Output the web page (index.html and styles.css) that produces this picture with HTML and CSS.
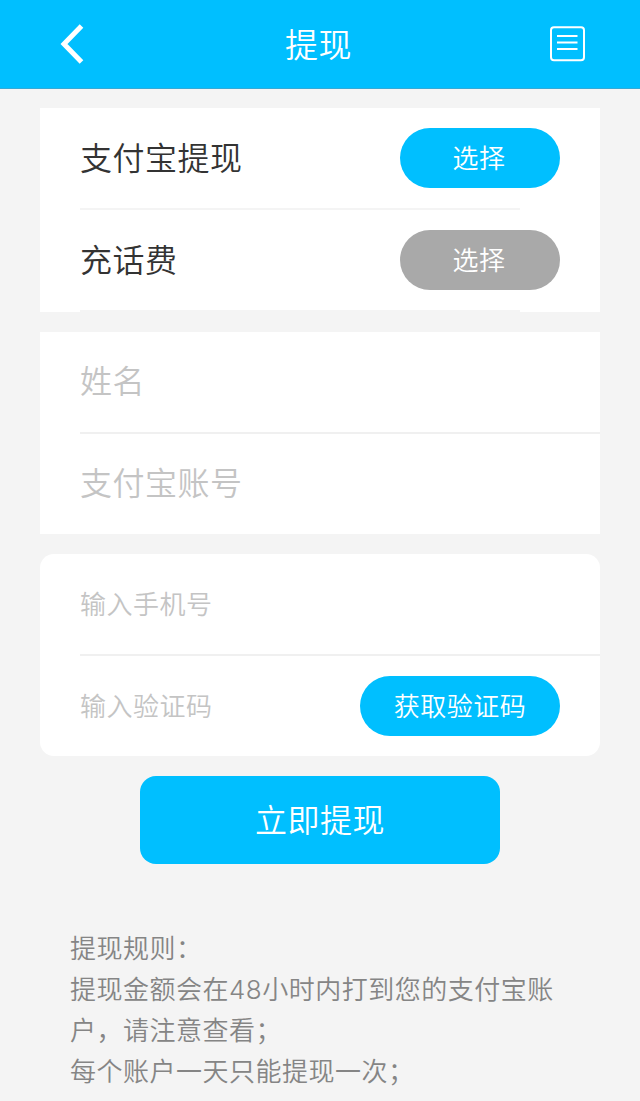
FILE: index.html
```html
<!DOCTYPE html>
<html lang="zh-CN">
  <head>
    <meta charset="utf-8">
    <title>提现</title>
    <link rel="stylesheet" href="styles.css">
  </head>
  <body>
    <header class="navbar">
      <svg class="icon-back" width="24" height="40" viewBox="0 0 24 40">
        <path d="M21.5 2 L4 20 L21.5 38" />
      </svg>
      <h1>提现</h1>
      <svg class="icon-list" width="36" height="36" viewBox="0 0 36 36">
        <rect x="2" y="1.2" width="33" height="33" rx="3" />
        <path d="M8 10H28.5M8 16.5H28.5M8 23H28.5" />
      </svg>
    </header>
    <div class="container">
      <div class="card">
        <div class="row row-short">
          <span class="label">支付宝提现</span>
          <button type="button" class="btn">选择</button>
        </div>
        <div class="row row-short">
          <span class="label">充话费</span>
          <button type="button" class="btn btn-gray">选择</button>
        </div>
      </div>
      <div class="card">
        <div class="row">
          <input type="text" placeholder="姓名">
        </div>
        <div class="row row-last">
          <input type="text" placeholder="支付宝账号">
        </div>
      </div>
      <div class="card card-round">
        <div class="row">
          <input type="text" class="small" placeholder="输入手机号">
        </div>
        <div class="row row-last">
          <input type="text" class="small" placeholder="输入验证码">
          <button type="button" class="btn btn-code">获取验证码</button>
        </div>
      </div>
      <button type="submit" class="submit">立即提现</button>
      <div class="rules">
        <p>提现规则：</p>
        <p>提现金额会在48小时内打到您的支付宝账<br>户，请注意查看；</p>
        <p>每个账户一天只能提现一次；</p>
      </div>
    </div>
  </body>
</html>
```

FILE: styles.css
```css
* {
  box-sizing: border-box;
}
body {
  margin: 0;
  height: 1101px;
  overflow: hidden;
  background-color: #f4f4f4;
  font-family: "Liberation Sans", "Noto Sans CJK SC DemiLight", "Noto Sans CJK SC", sans-serif;
  font-weight: 350;
  letter-spacing: 0.5px;
  color: #333;
}
.navbar {
  display: flex;
  align-items: center;
  justify-content: space-between;
  height: 89px;
  padding: 0 55px 0 60px;
  background-color: #00bfff;
  border-bottom: 1px solid #35a9d6;
}
.navbar h1 {
  margin: 0;
  padding: 0 0 2px 4px;
  font-size: 33px;
  font-weight: 350;
  color: #fff;
}
.navbar svg {
  fill: none;
  stroke: #fff;
}
.icon-back {
  stroke-width: 5;
}
.icon-list {
  stroke-width: 2;
}
.container {
  padding: 19px 40px 0;
}
.card {
  margin-bottom: 20px;
  padding-left: 40px;
  background-color: #fff;
}
.card-round {
  border-radius: 14px;
}
.row {
  display: flex;
  align-items: center;
  justify-content: space-between;
  height: 102px;
  padding-right: 40px;
  border-bottom: 2px solid #f0f0f0;
}
/* the divider stops before the right end of the row */
.row-short {
  border-bottom: none;
  background: linear-gradient(#f4f4f4, #f4f4f4) no-repeat 0 100% / 440px 2px;
  padding-bottom: 2px;
}
.row-last {
  height: 100px;
  border-bottom: none;
}
.label {
  padding-bottom: 4px;
  font-size: 32px;
}
input[type="text"] {
  flex: 1;
  min-width: 0;
  padding: 0;
  border: none;
  outline: none;
  background: none;
  font-family: inherit;
  font-size: 32px;
  font-weight: 350;
  letter-spacing: 0.5px;
}
input.small {
  padding-top: 2px;
  font-size: 26px;
}
input::placeholder {
  color: #c4c4c4;
}
.btn {
  width: 160px;
  height: 60px;
  padding: 0 2px 4px 0;
  border: none;
  border-radius: 30px;
  background-color: #00bfff;
  font-family: inherit;
  font-size: 26px;
  font-weight: 350;
  letter-spacing: 0.5px;
  color: #fff;
}
.btn-gray {
  background-color: #a9a9a9;
}
.btn-code {
  width: 200px;
  padding-right: 0;
}
.submit {
  display: block;
  width: 360px;
  height: 88px;
  margin: 0 auto;
  padding: 0 0 4px;
  border: none;
  border-radius: 16px;
  background-color: #00bfff;
  font-family: inherit;
  font-size: 32px;
  font-weight: 350;
  letter-spacing: 0.5px;
  color: #fff;
}
.rules {
  margin: 64px 0 0 30px;
  font-family: Inter, "Noto Sans CJK SC DemiLight", "Noto Sans CJK SC", sans-serif;
  font-size: 26px;
  line-height: 41px;
  white-space: nowrap;
  color: #858585;
}
.rules p {
  margin: 0;
}
```
